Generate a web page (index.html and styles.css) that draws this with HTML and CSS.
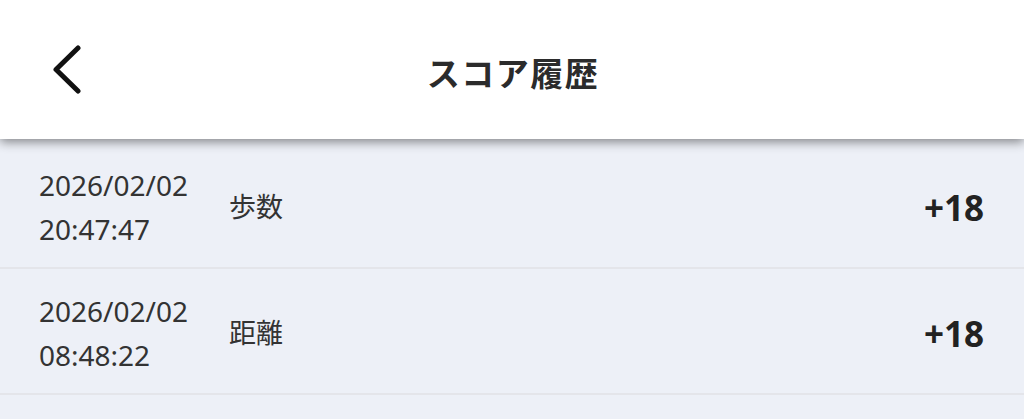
FILE: index.html
```html
<!DOCTYPE html>
<html lang="ja">
<head>
    <meta charset="UTF-8">
    <meta name="viewport" content="width=device-width, initial-scale=1.0">
    <title>スコア履歴</title>
    <link rel="stylesheet" href="styles.css">
</head>
<body>

    <div class="header">
        <button class="back" aria-label="戻る">
            <svg width="30" height="50" viewBox="0 0 30 50">
                <polyline points="25,3 3,24.5 25,46" fill="none" stroke="#111" stroke-width="5" stroke-linecap="round" stroke-linejoin="round"/>
            </svg>
        </button>
        <h1>スコア履歴</h1>
    </div>

    <div class="list">
        <div class="row">
            <div class="date">2026/02/02<br>20:47:47</div>
            <div class="label">歩数</div>
            <div class="score">+18</div>
        </div>
        <div class="row">
            <div class="date">2026/02/02<br>08:48:22</div>
            <div class="label">距離</div>
            <div class="score">+18</div>
        </div>
        <div class="row"></div>
    </div>

</body>
</html>
```

FILE: styles.css
```css
body {
    font-family: "Noto Sans", "Noto Sans CJK JP", sans-serif;
    background: #edf0f7;
    margin: 0;
    padding: 0;
    color: #333;
    overflow: hidden;
}
.header {
    position: relative;
    z-index: 1;
    height: 139px;
    background: #fff;
    display: flex;
    align-items: center;
    justify-content: center;
    box-shadow: 0 3px 10px rgba(0, 0, 0, 0.45);
}
.header h1 {
    margin: 0;
    font-size: 33px;
    font-weight: 700;
    color: #2b2b2b;
    letter-spacing: 1.5px;
    padding: 4px 0 0 2px;
}
.back {
    position: absolute;
    left: 53px;
    top: 45px;
    padding: 0;
    border: none;
    background: none;
    line-height: 0;
}
.list {
    padding-top: 4px;
}
.row {
    display: flex;
    align-items: center;
    height: 124px;
    padding: 0 40px 0 39px;
    border-bottom: 2px solid #e4e5ea;
}
.date {
    width: 190px;
    font-size: 28px;
    line-height: 44px;
    color: #333;
    padding-top: 4px;
}
.label {
    flex: 1;
    font-size: 27px;
    color: #333;
}
.score {
    font-size: 35px;
    font-weight: 700;
    color: #222;
    padding-top: 4px;
}
```
